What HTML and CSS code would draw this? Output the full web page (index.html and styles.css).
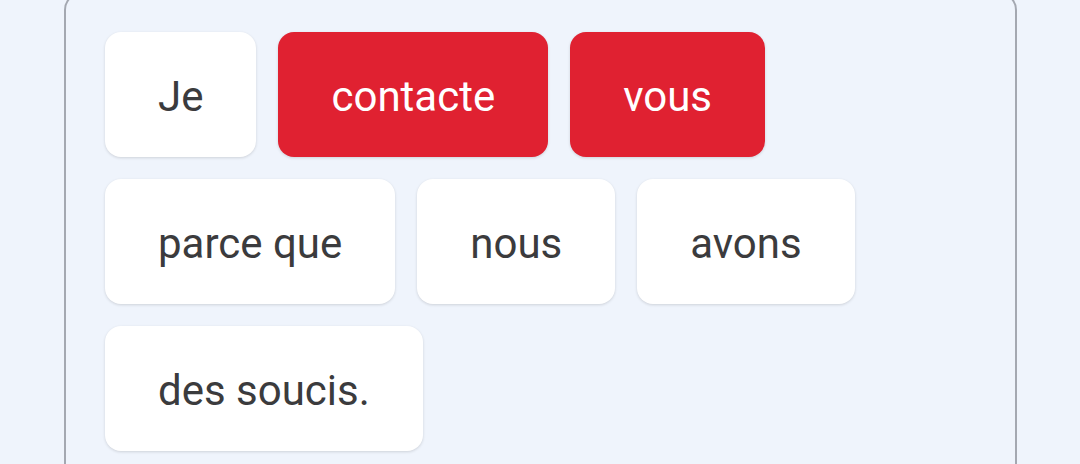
FILE: index.html
```html
<!DOCTYPE html>
<html lang="fr">
<head>
<meta charset="utf-8">
<link rel="stylesheet" href="styles.css">
</head>
<body>
<div class="panel">
  <div class="chips">
    <div class="chip">Je</div>
    <div class="chip selected">contacte</div>
    <div class="chip selected">vous</div>
  </div>
  <div class="chips">
    <div class="chip">parce que</div>
    <div class="chip">nous</div>
    <div class="chip">avons</div>
  </div>
  <div class="chips">
    <div class="chip">des soucis.</div>
  </div>
</div>
</body>
</html>
```
FILE: styles.css
```css
html, body {
  margin: 0;
  padding: 0;
  background: #eff4fc;
  font-family: Roboto, "Noto Sans", sans-serif;
}
body {
  width: 1080px;
  height: 464px;
  overflow: hidden;
}
.panel {
  box-sizing: border-box;
  margin: -8px 0 0 64px;
  width: 953px;
  height: 500px;
  border: 2px solid #a4a8b1;
  border-radius: 18px;
  padding: 38px 39px;
  display: flex;
  flex-direction: column;
  gap: 22px;
}
.chips {
  display: flex;
  gap: 22px;
}
.chip {
  height: 125px;
  box-sizing: border-box;
  padding: 4px 53px 0;
  display: flex;
  align-items: center;
  justify-content: center;
  background: #ffffff;
  color: #3b3b3d;
  font-size: 42px;
  border-radius: 16px;
  box-shadow: 0 1px 3px rgba(0, 0, 0, 0.14);
}
.chip.selected {
  background: #e02131;
  color: #ffffff;
}
```
